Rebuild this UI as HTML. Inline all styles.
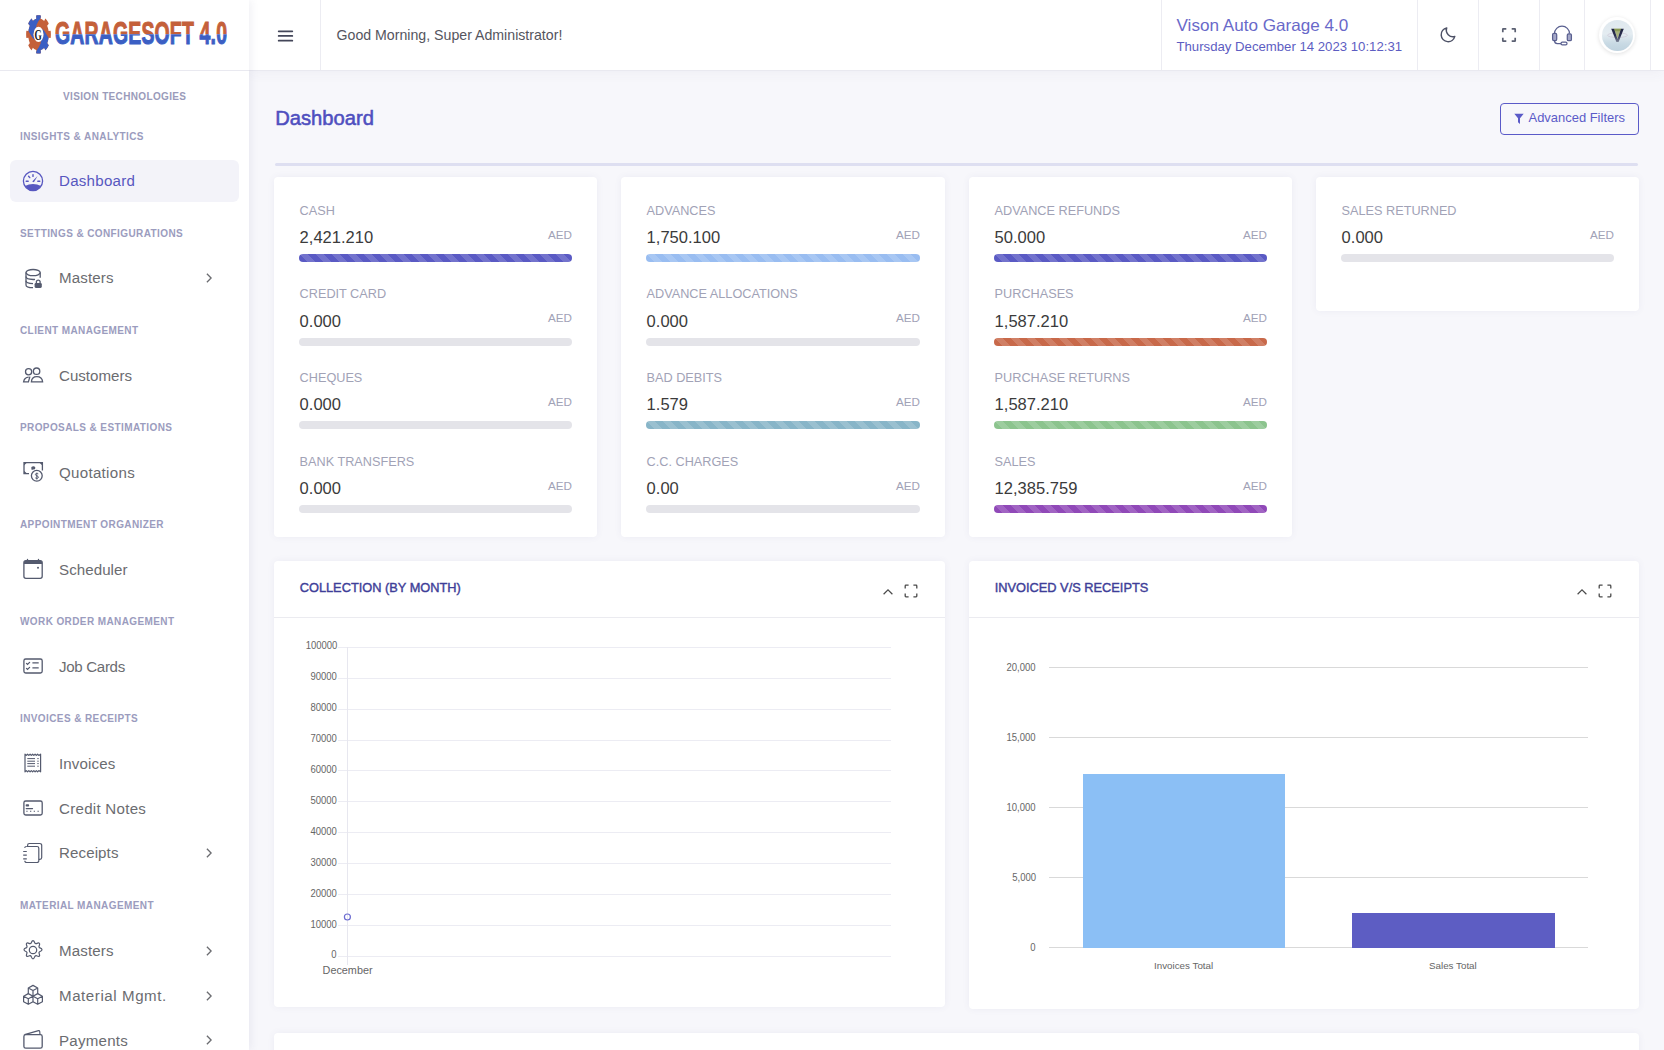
<!DOCTYPE html>
<html><head><meta charset="utf-8"><title>Dashboard</title>
<style>
*{box-sizing:border-box;margin:0;padding:0}
html,body{width:1664px;height:1050px;overflow:hidden;background:#f7f7fb;font-family:"Liberation Sans",sans-serif}
.abs{position:absolute}
.t{position:absolute;white-space:nowrap;line-height:1}
.card{position:absolute;background:#fff;border-radius:4px;box-shadow:0 0 7px rgba(80,80,140,.07)}
.bar{position:absolute;height:8px;border-radius:4px;background:#e4e4e9}
.striped{background-image:linear-gradient(45deg,rgba(255,255,255,.15) 25%,transparent 25%,transparent 50%,rgba(255,255,255,.15) 50%,rgba(255,255,255,.15) 75%,transparent 75%,transparent);background-size:16px 16px}
</style></head><body>
<div class="t" style="left:275.2px;top:107.60px;font-size:20.2px;font-weight:400;color:#4f4fbf;-webkit-text-stroke:0.55px #4f4fbf">Dashboard</div>
<div class="abs" style="left:1500px;top:103px;width:139px;height:32px;border:1px solid #5b5bc8;border-radius:4px"></div>
<svg class="abs" style="left:1513px;top:113px" width="12" height="12" viewBox="0 0 12 12"><path d="M1.3 0.8H10.7L7 5.2V11L5 9.2V5.2Z" fill="#5b5bc8"/></svg>
<div class="t" style="left:1528.5px;top:112.46px;font-size:12.96px;font-weight:400;color:#5b5bc8;">Advanced Filters</div>
<div class="abs" style="left:275px;top:163px;width:1363px;height:3px;background:#dedff1;border-radius:2px"></div>
<div class="card" style="left:274px;top:177px;width:323px;height:360px"></div>
<div class="t" style="left:299.6px;top:204.79px;font-size:12.7px;font-weight:400;color:#a1a2b6;">CASH</div>
<div class="t" style="left:299.6px;top:229.95px;font-size:16.54px;font-weight:400;color:#3b3b3b;">2,421.210</div>
<div class="t" style="right:1092px;top:228.81px;font-size:11.67px;font-weight:400;color:#a1a2b6;">AED</div>
<div class="bar striped" style="left:299px;top:254.0px;width:273px;background-color:#5a5ac4"></div>
<div class="t" style="left:299.6px;top:288.46px;font-size:12.7px;font-weight:400;color:#a1a2b6;">CREDIT CARD</div>
<div class="t" style="left:299.6px;top:313.62px;font-size:16.54px;font-weight:400;color:#3b3b3b;">0.000</div>
<div class="t" style="right:1092px;top:312.48px;font-size:11.67px;font-weight:400;color:#a1a2b6;">AED</div>
<div class="bar" style="left:299px;top:337.7px;width:273px;"></div>
<div class="t" style="left:299.6px;top:372.13px;font-size:12.7px;font-weight:400;color:#a1a2b6;">CHEQUES</div>
<div class="t" style="left:299.6px;top:397.29px;font-size:16.54px;font-weight:400;color:#3b3b3b;">0.000</div>
<div class="t" style="right:1092px;top:396.15px;font-size:11.67px;font-weight:400;color:#a1a2b6;">AED</div>
<div class="bar" style="left:299px;top:421.3px;width:273px;"></div>
<div class="t" style="left:299.6px;top:455.80px;font-size:12.7px;font-weight:400;color:#a1a2b6;">BANK TRANSFERS</div>
<div class="t" style="left:299.6px;top:480.96px;font-size:16.54px;font-weight:400;color:#3b3b3b;">0.000</div>
<div class="t" style="right:1092px;top:479.82px;font-size:11.67px;font-weight:400;color:#a1a2b6;">AED</div>
<div class="bar" style="left:299px;top:505.0px;width:273px;"></div>
<div class="card" style="left:621px;top:177px;width:324px;height:360px"></div>
<div class="t" style="left:646.6px;top:204.79px;font-size:12.7px;font-weight:400;color:#a1a2b6;">ADVANCES</div>
<div class="t" style="left:646.6px;top:229.95px;font-size:16.54px;font-weight:400;color:#3b3b3b;">1,750.100</div>
<div class="t" style="right:744px;top:228.81px;font-size:11.67px;font-weight:400;color:#a1a2b6;">AED</div>
<div class="bar striped" style="left:646px;top:254.0px;width:274px;background-color:#99bdf1"></div>
<div class="t" style="left:646.6px;top:288.46px;font-size:12.7px;font-weight:400;color:#a1a2b6;">ADVANCE ALLOCATIONS</div>
<div class="t" style="left:646.6px;top:313.62px;font-size:16.54px;font-weight:400;color:#3b3b3b;">0.000</div>
<div class="t" style="right:744px;top:312.48px;font-size:11.67px;font-weight:400;color:#a1a2b6;">AED</div>
<div class="bar" style="left:646px;top:337.7px;width:274px;"></div>
<div class="t" style="left:646.6px;top:372.13px;font-size:12.7px;font-weight:400;color:#a1a2b6;">BAD DEBITS</div>
<div class="t" style="left:646.6px;top:397.29px;font-size:16.54px;font-weight:400;color:#3b3b3b;">1.579</div>
<div class="t" style="right:744px;top:396.15px;font-size:11.67px;font-weight:400;color:#a1a2b6;">AED</div>
<div class="bar striped" style="left:646px;top:421.3px;width:274px;background-color:#88b5c8"></div>
<div class="t" style="left:646.6px;top:455.80px;font-size:12.7px;font-weight:400;color:#a1a2b6;">C.C. CHARGES</div>
<div class="t" style="left:646.6px;top:480.96px;font-size:16.54px;font-weight:400;color:#3b3b3b;">0.00</div>
<div class="t" style="right:744px;top:479.82px;font-size:11.67px;font-weight:400;color:#a1a2b6;">AED</div>
<div class="bar" style="left:646px;top:505.0px;width:274px;"></div>
<div class="card" style="left:969px;top:177px;width:323px;height:360px"></div>
<div class="t" style="left:994.6px;top:204.79px;font-size:12.7px;font-weight:400;color:#a1a2b6;">ADVANCE REFUNDS</div>
<div class="t" style="left:994.6px;top:229.95px;font-size:16.54px;font-weight:400;color:#3b3b3b;">50.000</div>
<div class="t" style="right:397px;top:228.81px;font-size:11.67px;font-weight:400;color:#a1a2b6;">AED</div>
<div class="bar striped" style="left:994px;top:254.0px;width:273px;background-color:#5a5ac4"></div>
<div class="t" style="left:994.6px;top:288.46px;font-size:12.7px;font-weight:400;color:#a1a2b6;">PURCHASES</div>
<div class="t" style="left:994.6px;top:313.62px;font-size:16.54px;font-weight:400;color:#3b3b3b;">1,587.210</div>
<div class="t" style="right:397px;top:312.48px;font-size:11.67px;font-weight:400;color:#a1a2b6;">AED</div>
<div class="bar striped" style="left:994px;top:337.7px;width:273px;background-color:#c8694a"></div>
<div class="t" style="left:994.6px;top:372.13px;font-size:12.7px;font-weight:400;color:#a1a2b6;">PURCHASE RETURNS</div>
<div class="t" style="left:994.6px;top:397.29px;font-size:16.54px;font-weight:400;color:#3b3b3b;">1,587.210</div>
<div class="t" style="right:397px;top:396.15px;font-size:11.67px;font-weight:400;color:#a1a2b6;">AED</div>
<div class="bar striped" style="left:994px;top:421.3px;width:273px;background-color:#8cc48e"></div>
<div class="t" style="left:994.6px;top:455.80px;font-size:12.7px;font-weight:400;color:#a1a2b6;">SALES</div>
<div class="t" style="left:994.6px;top:480.96px;font-size:16.54px;font-weight:400;color:#3b3b3b;">12,385.759</div>
<div class="t" style="right:397px;top:479.82px;font-size:11.67px;font-weight:400;color:#a1a2b6;">AED</div>
<div class="bar striped" style="left:994px;top:505.0px;width:273px;background-color:#9049b8"></div>
<div class="card" style="left:1316px;top:177px;width:323px;height:134px"></div>
<div class="t" style="left:1341.6px;top:204.79px;font-size:12.7px;font-weight:400;color:#a1a2b6;">SALES RETURNED</div>
<div class="t" style="left:1341.6px;top:229.95px;font-size:16.54px;font-weight:400;color:#3b3b3b;">0.000</div>
<div class="t" style="right:50px;top:228.81px;font-size:11.67px;font-weight:400;color:#a1a2b6;">AED</div>
<div class="bar" style="left:1341px;top:254.0px;width:273px;"></div>
<div class="card" style="left:274px;top:561px;width:671px;height:446px"></div><div class="t" style="left:299.7px;top:582.04px;font-size:12.8px;font-weight:400;color:#3e3e98;-webkit-text-stroke:0.4px #3e3e98">COLLECTION (BY MONTH)</div><div class="abs" style="left:274px;top:617px;width:671px;height:1px;background:#ebebf0"></div><svg class="abs" style="left:881px;top:583.8px" width="14" height="14" viewBox="0 0 14 14"><path d="M2.6 10.2L7 5.9L11.4 10.2" fill="none" stroke="#4a4a4a" stroke-width="1.2"/></svg><svg class="abs" style="left:904px;top:584px" width="14" height="14" viewBox="0 0 14 14"><path d="M1.2 4.6V1.9A.7 .7 0 0 1 1.9 1.2H4.6M9.4 1.2H12.1A.7 .7 0 0 1 12.8 1.9V4.6M12.8 9.4V12.1A.7 .7 0 0 1 12.1 12.8H9.4M4.6 12.8H1.9A.7 .7 0 0 1 1.2 12.1V9.4" fill="none" stroke="#4a4a4a" stroke-width="1.3"/></svg>
<div class="card" style="left:969px;top:561px;width:670px;height:448px"></div><div class="t" style="left:994.7px;top:582.04px;font-size:12.8px;font-weight:400;color:#3e3e98;-webkit-text-stroke:0.4px #3e3e98">INVOICED V/S RECEIPTS</div><div class="abs" style="left:969px;top:617px;width:670px;height:1px;background:#ebebf0"></div><svg class="abs" style="left:1575px;top:583.8px" width="14" height="14" viewBox="0 0 14 14"><path d="M2.6 10.2L7 5.9L11.4 10.2" fill="none" stroke="#4a4a4a" stroke-width="1.2"/></svg><svg class="abs" style="left:1598px;top:584px" width="14" height="14" viewBox="0 0 14 14"><path d="M1.2 4.6V1.9A.7 .7 0 0 1 1.9 1.2H4.6M9.4 1.2H12.1A.7 .7 0 0 1 12.8 1.9V4.6M12.8 9.4V12.1A.7 .7 0 0 1 12.1 12.8H9.4M4.6 12.8H1.9A.7 .7 0 0 1 1.2 12.1V9.4" fill="none" stroke="#4a4a4a" stroke-width="1.3"/></svg>
<div class="card" style="left:274px;top:1033px;width:1365px;height:100px"></div>
<svg class="abs" style="left:274px;top:618px" width="671" height="389"><line x1="64" y1="29.5" x2="617" y2="29.5" stroke="#ececf3" stroke-width="1"/><line x1="64" y1="60.5" x2="617" y2="60.5" stroke="#ececf3" stroke-width="1"/><line x1="64" y1="91.5" x2="617" y2="91.5" stroke="#ececf3" stroke-width="1"/><line x1="64" y1="122.5" x2="617" y2="122.5" stroke="#ececf3" stroke-width="1"/><line x1="64" y1="152.5" x2="617" y2="152.5" stroke="#ececf3" stroke-width="1"/><line x1="64" y1="183.5" x2="617" y2="183.5" stroke="#ececf3" stroke-width="1"/><line x1="64" y1="214.5" x2="617" y2="214.5" stroke="#ececf3" stroke-width="1"/><line x1="64" y1="245.5" x2="617" y2="245.5" stroke="#ececf3" stroke-width="1"/><line x1="64" y1="276.5" x2="617" y2="276.5" stroke="#ececf3" stroke-width="1"/><line x1="64" y1="307.5" x2="617" y2="307.5" stroke="#ececf3" stroke-width="1"/><line x1="64" y1="338.5" x2="617" y2="338.5" stroke="#ececf3" stroke-width="1"/><line x1="73.5" y1="29" x2="73.5" y2="347" stroke="#e7e7ef" stroke-width="1"/><circle cx="73.4" cy="299" r="3" fill="none" stroke="#6b6bd0" stroke-width="1.2"/></svg>
<div class="t" style="right:1327px;top:641.45px;font-size:10.0px;font-weight:400;color:#666;transform:scaleX(0.95);transform-origin:100% 50%">100000</div>
<div class="t" style="right:1327px;top:672.35px;font-size:10.0px;font-weight:400;color:#666;transform:scaleX(0.95);transform-origin:100% 50%">90000</div>
<div class="t" style="right:1327px;top:703.25px;font-size:10.0px;font-weight:400;color:#666;transform:scaleX(0.95);transform-origin:100% 50%">80000</div>
<div class="t" style="right:1327px;top:734.15px;font-size:10.0px;font-weight:400;color:#666;transform:scaleX(0.95);transform-origin:100% 50%">70000</div>
<div class="t" style="right:1327px;top:765.05px;font-size:10.0px;font-weight:400;color:#666;transform:scaleX(0.95);transform-origin:100% 50%">60000</div>
<div class="t" style="right:1327px;top:795.95px;font-size:10.0px;font-weight:400;color:#666;transform:scaleX(0.95);transform-origin:100% 50%">50000</div>
<div class="t" style="right:1327px;top:826.85px;font-size:10.0px;font-weight:400;color:#666;transform:scaleX(0.95);transform-origin:100% 50%">40000</div>
<div class="t" style="right:1327px;top:857.75px;font-size:10.0px;font-weight:400;color:#666;transform:scaleX(0.95);transform-origin:100% 50%">30000</div>
<div class="t" style="right:1327px;top:888.65px;font-size:10.0px;font-weight:400;color:#666;transform:scaleX(0.95);transform-origin:100% 50%">20000</div>
<div class="t" style="right:1327px;top:919.55px;font-size:10.0px;font-weight:400;color:#666;transform:scaleX(0.95);transform-origin:100% 50%">10000</div>
<div class="t" style="right:1327px;top:950.45px;font-size:10.0px;font-weight:400;color:#666;transform:scaleX(0.95);transform-origin:100% 50%">0</div>
<div class="t" style="left:322.6px;top:964.53px;font-size:10.84px;font-weight:400;color:#666;">December</div>
<svg class="abs" style="left:969px;top:618px" width="670" height="389"><line x1="80" y1="49.5" x2="619" y2="49.5" stroke="#d9d9d9" stroke-width="1"/><line x1="80" y1="119.5" x2="619" y2="119.5" stroke="#d9d9d9" stroke-width="1"/><line x1="80" y1="189.5" x2="619" y2="189.5" stroke="#d9d9d9" stroke-width="1"/><line x1="80" y1="259.5" x2="619" y2="259.5" stroke="#d9d9d9" stroke-width="1"/><line x1="80" y1="329.5" x2="619" y2="329.5" stroke="#d9d9d9" stroke-width="1"/><rect x="114" y="156" width="202" height="174" fill="#8bbff5"/><rect x="383" y="295" width="203" height="35" fill="#5d5dc3"/></svg>
<div class="t" style="right:628px;top:663.15px;font-size:10.0px;font-weight:400;color:#666;transform:scaleX(0.95);transform-origin:100% 50%">20,000</div>
<div class="t" style="right:628px;top:733.15px;font-size:10.0px;font-weight:400;color:#666;transform:scaleX(0.95);transform-origin:100% 50%">15,000</div>
<div class="t" style="right:628px;top:803.15px;font-size:10.0px;font-weight:400;color:#666;transform:scaleX(0.95);transform-origin:100% 50%">10,000</div>
<div class="t" style="right:628px;top:873.15px;font-size:10.0px;font-weight:400;color:#666;transform:scaleX(0.95);transform-origin:100% 50%">5,000</div>
<div class="t" style="right:628px;top:943.15px;font-size:10.0px;font-weight:400;color:#666;transform:scaleX(0.95);transform-origin:100% 50%">0</div>
<div class="t" style="left:1154px;top:960.55px;font-size:9.81px;font-weight:400;color:#666;">Invoices Total</div>
<div class="t" style="left:1429px;top:960.55px;font-size:9.81px;font-weight:400;color:#666;">Sales Total</div>
<div class="abs" style="left:249px;top:0;width:1415px;height:71px;background:#fff;border-bottom:1px solid #e9e9f0;box-shadow:0 3px 12px rgba(60,60,110,.045)"></div>
<div class="abs" style="left:320px;top:0;width:1px;height:70px;background:#ececf2"></div>
<div class="abs" style="left:1161px;top:0;width:1px;height:70px;background:#ececf2"></div>
<div class="abs" style="left:1417px;top:0;width:1px;height:70px;background:#ececf2"></div>
<div class="abs" style="left:1478px;top:0;width:1px;height:70px;background:#ececf2"></div>
<div class="abs" style="left:1539px;top:0;width:1px;height:70px;background:#ececf2"></div>
<div class="abs" style="left:1584px;top:0;width:1px;height:70px;background:#ececf2"></div>
<div class="abs" style="left:1650px;top:0;width:1px;height:70px;background:#ececf2"></div>
<svg class="abs" style="left:276px;top:28px" width="18" height="16" viewBox="0 0 18 16"><path d="M2.7 3.3H16.3M2.7 7.9H16.3M2.7 12.7H16.3" stroke="#434659" stroke-width="1.8" stroke-linecap="round"/></svg>
<div class="t" style="left:336.5px;top:28.14px;font-size:14.17px;font-weight:400;color:#55555e;">Good Morning, Super Administrator!</div>
<div class="t" style="left:1176.5px;top:17.05px;font-size:17.12px;font-weight:400;color:#6969c9;">Vison Auto Garage 4.0</div>
<div class="t" style="left:1176.5px;top:39.74px;font-size:13.18px;font-weight:400;color:#5d5dc2;">Thursday December 14 2023 10:12:31</div>
<svg class="abs" style="left:1438px;top:25px" width="20" height="20" viewBox="0 0 20 20"><path d="M8.7 3A6.9 6.9 0 1 0 16.8 11.4A6.6 6.6 0 0 1 8.7 3Z" fill="none" stroke="#4d5166" stroke-width="1.45" stroke-linejoin="round"/></svg>
<svg class="abs" style="left:1501px;top:27px" width="16" height="16" viewBox="0 0 16 16"><path d="M1.8 5.3V2.2A.4 .4 0 0 1 2.2 1.8H5.3M10.7 1.8H13.8A.4 .4 0 0 1 14.2 2.2V5.3M14.2 10.7V13.8A.4 .4 0 0 1 13.8 14.2H10.7M5.3 14.2H2.2A.4 .4 0 0 1 1.8 13.8V10.7" fill="none" stroke="#5b6072" stroke-width="1.7"/></svg>
<svg class="abs" style="left:1551px;top:25px" width="22" height="22" viewBox="0 0 22 22"><g fill="none" stroke="#5a6090" stroke-width="1.25"><path d="M3.5 8.6A7.5 7.4 0 0 1 18.5 8.6"/><rect x="1.6" y="8.4" width="4.1" height="7.2" rx="1.3" fill="#a5a8c8"/><rect x="16.3" y="8.8" width="4.1" height="6.9" rx="1.3" fill="#a5a8c8"/><path d="M3.4 15.6C3.6 17.5 4.6 18.6 6.3 18.6H10"/><rect x="10" y="17.2" width="6" height="2.7" rx="1.3"/></g></svg>
<div class="abs" style="left:1599px;top:17px;width:36px;height:36px;border-radius:50%;background:#fff;box-shadow:0 1px 4px rgba(0,0,0,.12)"></div>
<div class="abs" style="left:1602px;top:20px;width:31px;height:31px;border-radius:50%;background:linear-gradient(180deg,#dfe8ee 0%,#e4ecf1 45%,#c9dae4 75%,#bfd2de 100%)"></div>
<svg class="abs" style="left:1602px;top:20px" width="31" height="31" viewBox="0 0 31 31"><defs><linearGradient id="vg" x1="0" y1="0" x2="0" y2="1"><stop offset="0" stop-color="#1f2340"/><stop offset="0.5" stop-color="#2c3050"/><stop offset="1" stop-color="#7d8498"/></linearGradient></defs><ellipse cx="15.5" cy="15.2" rx="10" ry="2.3" fill="none" stroke="#cdc6d6" stroke-width="0.7"/><path d="M11.9 8.8H19.1L15.5 18.5Z" fill="#a7b27a"/><path d="M11.9 8.8H19.1L18.2 11.3H12.8Z" fill="#8a9a55"/><path d="M9.2 8.8H12L15.5 19L19 8.8H21.8L16.6 22H14.4Z" fill="url(#vg)"/></svg>
<div class="abs" style="left:0;top:0;width:249px;height:1050px;background:#fff;box-shadow:1px 0 9px rgba(60,60,110,.09)"></div>
<div class="abs" style="left:0;top:70px;width:249px;height:1px;background:#e9e9f0"></div>
<svg class="abs" style="left:20px;top:10px" width="40" height="50" viewBox="0 0 40 50">
<defs><clipPath id="gc"><path d="M30.86 24.40 L30.86 24.74 L30.85 25.07 L30.84 25.40 L30.83 25.74 L30.81 26.07 L30.79 26.41 L30.77 26.74 L30.74 27.07 L30.71 27.40 L30.67 27.73 L30.63 28.06 L28.57 27.73 L28.54 28.00 L28.49 28.27 L28.45 28.54 L28.40 28.81 L28.35 29.08 L28.30 29.34 L28.24 29.61 L28.18 29.87 L28.12 30.13 L28.05 30.39 L27.98 30.65 L27.91 30.91 L27.83 31.16 L27.76 31.41 L27.68 31.66 L27.59 31.91 L27.51 32.16 L27.42 32.40 L27.33 32.64 L27.23 32.88 L27.14 33.11 L28.75 35.14 L28.62 35.41 L28.50 35.69 L28.37 35.95 L28.24 36.22 L28.11 36.48 L27.97 36.74 L27.83 37.00 L27.69 37.25 L27.54 37.49 L27.39 37.74 L27.24 37.98 L27.09 38.21 L26.93 38.44 L26.77 38.67 L26.61 38.89 L26.44 39.11 L26.28 39.32 L26.11 39.53 L25.94 39.73 L25.77 39.93 L25.59 40.13 L25.41 40.32 L24.11 37.82 L23.96 37.97 L23.80 38.11 L23.65 38.26 L23.49 38.39 L23.34 38.53 L23.18 38.66 L23.02 38.78 L22.85 38.90 L22.69 39.02 L22.52 39.13 L22.36 39.23 L22.19 39.34 L22.02 39.44 L21.85 39.53 L21.68 39.62 L21.51 39.70 L21.34 39.78 L21.17 39.85 L20.99 39.92 L20.82 39.99 L20.64 40.05 L20.86 43.25 L20.65 43.31 L20.43 43.36 L20.22 43.41 L20.01 43.46 L19.79 43.49 L19.58 43.53 L19.36 43.55 L19.15 43.57 L18.93 43.59 L18.72 43.60 L18.50 43.60 L18.28 43.60 L18.07 43.59 L17.85 43.57 L17.64 43.55 L17.42 43.53 L17.21 43.49 L16.99 43.46 L16.78 43.41 L16.57 43.36 L16.35 43.31 L16.14 43.25 L16.36 40.05 L16.18 39.99 L16.01 39.92 L15.83 39.85 L15.66 39.78 L15.49 39.70 L15.32 39.62 L15.15 39.53 L14.98 39.44 L14.81 39.34 L14.64 39.23 L14.48 39.13 L14.31 39.02 L14.15 38.90 L13.98 38.78 L13.82 38.66 L13.66 38.53 L13.51 38.39 L13.35 38.26 L13.20 38.11 L13.04 37.97 L12.89 37.82 L11.59 40.32 L11.41 40.13 L11.23 39.93 L11.06 39.73 L10.89 39.53 L10.72 39.32 L10.56 39.11 L10.39 38.89 L10.23 38.67 L10.07 38.44 L9.91 38.21 L9.76 37.98 L9.61 37.74 L9.46 37.49 L9.31 37.25 L9.17 37.00 L9.03 36.74 L8.89 36.48 L8.76 36.22 L8.63 35.95 L8.50 35.69 L8.38 35.41 L8.25 35.14 L9.86 33.11 L9.77 32.88 L9.67 32.64 L9.58 32.40 L9.49 32.16 L9.41 31.91 L9.32 31.66 L9.24 31.41 L9.17 31.16 L9.09 30.91 L9.02 30.65 L8.95 30.39 L8.88 30.13 L8.82 29.87 L8.76 29.61 L8.70 29.34 L8.65 29.08 L8.60 28.81 L8.55 28.54 L8.51 28.27 L8.46 28.00 L8.43 27.73 L6.37 28.06 L6.33 27.73 L6.29 27.40 L6.26 27.07 L6.23 26.74 L6.21 26.41 L6.19 26.07 L6.17 25.74 L6.16 25.40 L6.15 25.07 L6.14 24.74 L6.14 24.40 L6.14 24.06 L6.15 23.73 L6.16 23.40 L6.17 23.06 L6.19 22.73 L6.21 22.39 L6.23 22.06 L6.26 21.73 L6.29 21.40 L6.33 21.07 L6.37 20.74 L8.43 21.07 L8.46 20.80 L8.51 20.53 L8.55 20.26 L8.60 19.99 L8.65 19.72 L8.70 19.46 L8.76 19.19 L8.82 18.93 L8.88 18.67 L8.95 18.41 L9.02 18.15 L9.09 17.89 L9.17 17.64 L9.24 17.39 L9.32 17.14 L9.41 16.89 L9.49 16.64 L9.58 16.40 L9.67 16.16 L9.77 15.92 L9.86 15.69 L8.25 13.66 L8.38 13.39 L8.50 13.11 L8.63 12.85 L8.76 12.58 L8.89 12.32 L9.03 12.06 L9.17 11.80 L9.31 11.55 L9.46 11.31 L9.61 11.06 L9.76 10.82 L9.91 10.59 L10.07 10.36 L10.23 10.13 L10.39 9.91 L10.56 9.69 L10.72 9.48 L10.89 9.27 L11.06 9.07 L11.23 8.87 L11.41 8.67 L11.59 8.48 L12.89 10.98 L13.04 10.83 L13.20 10.69 L13.35 10.54 L13.51 10.41 L13.66 10.27 L13.82 10.14 L13.98 10.02 L14.15 9.90 L14.31 9.78 L14.48 9.67 L14.64 9.57 L14.81 9.46 L14.98 9.36 L15.15 9.27 L15.32 9.18 L15.49 9.10 L15.66 9.02 L15.83 8.95 L16.01 8.88 L16.18 8.81 L16.36 8.75 L16.14 5.55 L16.35 5.49 L16.57 5.44 L16.78 5.39 L16.99 5.34 L17.21 5.31 L17.42 5.27 L17.64 5.25 L17.85 5.23 L18.07 5.21 L18.28 5.20 L18.50 5.20 L18.72 5.20 L18.93 5.21 L19.15 5.23 L19.36 5.25 L19.58 5.27 L19.79 5.31 L20.01 5.34 L20.22 5.39 L20.43 5.44 L20.65 5.49 L20.86 5.55 L20.64 8.75 L20.82 8.81 L20.99 8.88 L21.17 8.95 L21.34 9.02 L21.51 9.10 L21.68 9.18 L21.85 9.27 L22.02 9.36 L22.19 9.46 L22.36 9.57 L22.52 9.67 L22.69 9.78 L22.85 9.90 L23.02 10.02 L23.18 10.14 L23.34 10.27 L23.49 10.41 L23.65 10.54 L23.80 10.69 L23.96 10.83 L24.11 10.98 L25.41 8.48 L25.59 8.67 L25.77 8.87 L25.94 9.07 L26.11 9.27 L26.28 9.48 L26.44 9.69 L26.61 9.91 L26.77 10.13 L26.93 10.36 L27.09 10.59 L27.24 10.82 L27.39 11.06 L27.54 11.31 L27.69 11.55 L27.83 11.80 L27.97 12.06 L28.11 12.32 L28.24 12.58 L28.37 12.85 L28.50 13.11 L28.62 13.39 L28.75 13.66 L27.14 15.69 L27.23 15.92 L27.33 16.16 L27.42 16.40 L27.51 16.64 L27.59 16.89 L27.68 17.14 L27.76 17.39 L27.83 17.64 L27.91 17.89 L27.98 18.15 L28.05 18.41 L28.12 18.67 L28.18 18.93 L28.24 19.19 L28.30 19.46 L28.35 19.72 L28.40 19.99 L28.45 20.26 L28.49 20.53 L28.54 20.80 L28.57 21.07 L30.63 20.74 L30.67 21.07 L30.71 21.40 L30.74 21.73 L30.77 22.06 L30.79 22.39 L30.81 22.73 L30.83 23.06 L30.84 23.40 L30.85 23.73 L30.86 24.06Z"/></clipPath></defs>
<path d="M30.86 24.40 L30.86 24.74 L30.85 25.07 L30.84 25.40 L30.83 25.74 L30.81 26.07 L30.79 26.41 L30.77 26.74 L30.74 27.07 L30.71 27.40 L30.67 27.73 L30.63 28.06 L28.57 27.73 L28.54 28.00 L28.49 28.27 L28.45 28.54 L28.40 28.81 L28.35 29.08 L28.30 29.34 L28.24 29.61 L28.18 29.87 L28.12 30.13 L28.05 30.39 L27.98 30.65 L27.91 30.91 L27.83 31.16 L27.76 31.41 L27.68 31.66 L27.59 31.91 L27.51 32.16 L27.42 32.40 L27.33 32.64 L27.23 32.88 L27.14 33.11 L28.75 35.14 L28.62 35.41 L28.50 35.69 L28.37 35.95 L28.24 36.22 L28.11 36.48 L27.97 36.74 L27.83 37.00 L27.69 37.25 L27.54 37.49 L27.39 37.74 L27.24 37.98 L27.09 38.21 L26.93 38.44 L26.77 38.67 L26.61 38.89 L26.44 39.11 L26.28 39.32 L26.11 39.53 L25.94 39.73 L25.77 39.93 L25.59 40.13 L25.41 40.32 L24.11 37.82 L23.96 37.97 L23.80 38.11 L23.65 38.26 L23.49 38.39 L23.34 38.53 L23.18 38.66 L23.02 38.78 L22.85 38.90 L22.69 39.02 L22.52 39.13 L22.36 39.23 L22.19 39.34 L22.02 39.44 L21.85 39.53 L21.68 39.62 L21.51 39.70 L21.34 39.78 L21.17 39.85 L20.99 39.92 L20.82 39.99 L20.64 40.05 L20.86 43.25 L20.65 43.31 L20.43 43.36 L20.22 43.41 L20.01 43.46 L19.79 43.49 L19.58 43.53 L19.36 43.55 L19.15 43.57 L18.93 43.59 L18.72 43.60 L18.50 43.60 L18.28 43.60 L18.07 43.59 L17.85 43.57 L17.64 43.55 L17.42 43.53 L17.21 43.49 L16.99 43.46 L16.78 43.41 L16.57 43.36 L16.35 43.31 L16.14 43.25 L16.36 40.05 L16.18 39.99 L16.01 39.92 L15.83 39.85 L15.66 39.78 L15.49 39.70 L15.32 39.62 L15.15 39.53 L14.98 39.44 L14.81 39.34 L14.64 39.23 L14.48 39.13 L14.31 39.02 L14.15 38.90 L13.98 38.78 L13.82 38.66 L13.66 38.53 L13.51 38.39 L13.35 38.26 L13.20 38.11 L13.04 37.97 L12.89 37.82 L11.59 40.32 L11.41 40.13 L11.23 39.93 L11.06 39.73 L10.89 39.53 L10.72 39.32 L10.56 39.11 L10.39 38.89 L10.23 38.67 L10.07 38.44 L9.91 38.21 L9.76 37.98 L9.61 37.74 L9.46 37.49 L9.31 37.25 L9.17 37.00 L9.03 36.74 L8.89 36.48 L8.76 36.22 L8.63 35.95 L8.50 35.69 L8.38 35.41 L8.25 35.14 L9.86 33.11 L9.77 32.88 L9.67 32.64 L9.58 32.40 L9.49 32.16 L9.41 31.91 L9.32 31.66 L9.24 31.41 L9.17 31.16 L9.09 30.91 L9.02 30.65 L8.95 30.39 L8.88 30.13 L8.82 29.87 L8.76 29.61 L8.70 29.34 L8.65 29.08 L8.60 28.81 L8.55 28.54 L8.51 28.27 L8.46 28.00 L8.43 27.73 L6.37 28.06 L6.33 27.73 L6.29 27.40 L6.26 27.07 L6.23 26.74 L6.21 26.41 L6.19 26.07 L6.17 25.74 L6.16 25.40 L6.15 25.07 L6.14 24.74 L6.14 24.40 L6.14 24.06 L6.15 23.73 L6.16 23.40 L6.17 23.06 L6.19 22.73 L6.21 22.39 L6.23 22.06 L6.26 21.73 L6.29 21.40 L6.33 21.07 L6.37 20.74 L8.43 21.07 L8.46 20.80 L8.51 20.53 L8.55 20.26 L8.60 19.99 L8.65 19.72 L8.70 19.46 L8.76 19.19 L8.82 18.93 L8.88 18.67 L8.95 18.41 L9.02 18.15 L9.09 17.89 L9.17 17.64 L9.24 17.39 L9.32 17.14 L9.41 16.89 L9.49 16.64 L9.58 16.40 L9.67 16.16 L9.77 15.92 L9.86 15.69 L8.25 13.66 L8.38 13.39 L8.50 13.11 L8.63 12.85 L8.76 12.58 L8.89 12.32 L9.03 12.06 L9.17 11.80 L9.31 11.55 L9.46 11.31 L9.61 11.06 L9.76 10.82 L9.91 10.59 L10.07 10.36 L10.23 10.13 L10.39 9.91 L10.56 9.69 L10.72 9.48 L10.89 9.27 L11.06 9.07 L11.23 8.87 L11.41 8.67 L11.59 8.48 L12.89 10.98 L13.04 10.83 L13.20 10.69 L13.35 10.54 L13.51 10.41 L13.66 10.27 L13.82 10.14 L13.98 10.02 L14.15 9.90 L14.31 9.78 L14.48 9.67 L14.64 9.57 L14.81 9.46 L14.98 9.36 L15.15 9.27 L15.32 9.18 L15.49 9.10 L15.66 9.02 L15.83 8.95 L16.01 8.88 L16.18 8.81 L16.36 8.75 L16.14 5.55 L16.35 5.49 L16.57 5.44 L16.78 5.39 L16.99 5.34 L17.21 5.31 L17.42 5.27 L17.64 5.25 L17.85 5.23 L18.07 5.21 L18.28 5.20 L18.50 5.20 L18.72 5.20 L18.93 5.21 L19.15 5.23 L19.36 5.25 L19.58 5.27 L19.79 5.31 L20.01 5.34 L20.22 5.39 L20.43 5.44 L20.65 5.49 L20.86 5.55 L20.64 8.75 L20.82 8.81 L20.99 8.88 L21.17 8.95 L21.34 9.02 L21.51 9.10 L21.68 9.18 L21.85 9.27 L22.02 9.36 L22.19 9.46 L22.36 9.57 L22.52 9.67 L22.69 9.78 L22.85 9.90 L23.02 10.02 L23.18 10.14 L23.34 10.27 L23.49 10.41 L23.65 10.54 L23.80 10.69 L23.96 10.83 L24.11 10.98 L25.41 8.48 L25.59 8.67 L25.77 8.87 L25.94 9.07 L26.11 9.27 L26.28 9.48 L26.44 9.69 L26.61 9.91 L26.77 10.13 L26.93 10.36 L27.09 10.59 L27.24 10.82 L27.39 11.06 L27.54 11.31 L27.69 11.55 L27.83 11.80 L27.97 12.06 L28.11 12.32 L28.24 12.58 L28.37 12.85 L28.50 13.11 L28.62 13.39 L28.75 13.66 L27.14 15.69 L27.23 15.92 L27.33 16.16 L27.42 16.40 L27.51 16.64 L27.59 16.89 L27.68 17.14 L27.76 17.39 L27.83 17.64 L27.91 17.89 L27.98 18.15 L28.05 18.41 L28.12 18.67 L28.18 18.93 L28.24 19.19 L28.30 19.46 L28.35 19.72 L28.40 19.99 L28.45 20.26 L28.49 20.53 L28.54 20.80 L28.57 21.07 L30.63 20.74 L30.67 21.07 L30.71 21.40 L30.74 21.73 L30.77 22.06 L30.79 22.39 L30.81 22.73 L30.83 23.06 L30.84 23.40 L30.85 23.73 L30.86 24.06Z" fill="#c4603a"/>
<g clip-path="url(#gc)"><path d="M22.96 3.10 L21.92 2.64 L20.86 2.30 L19.78 2.09 L18.70 2.00 L17.62 2.04 L16.54 2.21 L15.48 2.50 L14.43 2.91 L13.40 3.45 L12.41 4.10 L11.44 4.87 L10.52 5.74 L9.64 6.72 L8.81 7.81 L8.04 8.98 L7.33 10.24 L6.67 11.58 L6.09 13.00 L5.57 14.48 L5.13 16.01 L8.43 21.07 L10.47 24.40 L12.50 27.79 L14.86 30.06 L15.72 30.56 L15.34 30.10 L14.99 29.58 L14.67 29.00 L14.39 28.38 L14.16 27.73 L13.97 27.03 L13.82 26.31 L13.72 25.58 L13.67 24.83 L13.66 24.07 L13.71 23.32 L13.80 22.58 L13.94 21.86 L14.13 21.16 L14.36 20.50 L14.63 19.87 L14.95 19.30 L15.29 18.77 L15.67 18.30 L16.08 17.89 L16.53 14.97 L18.21 11.61 L20.29 8.64Z" fill="#3b5fc4"/><path d="M14.04 45.70 L15.08 46.16 L16.14 46.50 L17.22 46.71 L18.30 46.80 L19.38 46.76 L20.46 46.59 L21.52 46.30 L22.57 45.89 L23.60 45.35 L24.59 44.70 L25.56 43.93 L26.48 43.06 L27.36 42.08 L28.19 40.99 L28.96 39.82 L29.67 38.56 L30.33 37.22 L30.91 35.80 L31.43 34.32 L31.87 32.79 L28.57 27.73 L26.53 24.40 L24.50 21.01 L22.14 18.74 L21.28 18.24 L21.66 18.70 L22.01 19.22 L22.33 19.80 L22.61 20.42 L22.84 21.07 L23.03 21.77 L23.18 22.49 L23.28 23.22 L23.33 23.97 L23.34 24.73 L23.29 25.48 L23.20 26.22 L23.06 26.94 L22.87 27.64 L22.64 28.30 L22.37 28.93 L22.05 29.50 L21.71 30.03 L21.33 30.50 L20.92 30.91 L20.47 33.83 L18.79 37.19 L16.71 40.16Z" fill="#3b5fc4"/></g>
<ellipse cx="18.5" cy="24.4" rx="5.0" ry="7.7" fill="#fff"/>
<text x="0" y="0" font-family="Liberation Serif" font-size="15" font-weight="700" fill="#1a1a1a" transform="translate(14.6,29.5) scale(0.62,1)">G</text>
</svg>
<div class="t" style="left:55px;top:18.3px;font-size:31.5px;font-weight:700;transform:scaleX(0.617);transform-origin:0 0;color:#c4603a;-webkit-text-stroke:1.1px #c4603a;clip-path:inset(0 0 49% 0);letter-spacing:0.3px">GARAGESOFT 4.0</div>
<div class="t" style="left:55px;top:18.3px;font-size:31.5px;font-weight:700;transform:scaleX(0.617);transform-origin:0 0;color:#3b5fc4;-webkit-text-stroke:1.1px #3b5fc4;clip-path:inset(51% 0 0 0);letter-spacing:0.3px">GARAGESOFT 4.0</div>
<div class="abs" style="left:10px;top:160px;width:229px;height:42px;border-radius:6px;background:#f3f3f9"></div>
<div class="t" style="left:0.2px;top:91.75px;font-size:10.0px;font-weight:700;color:#9a9bba;width:249px;text-align:center;letter-spacing:0.35px">VISION TECHNOLOGIES</div>
<div class="t" style="left:20px;top:131.97px;font-size:10.0px;font-weight:700;color:#9b9cbe;letter-spacing:0.4px">INSIGHTS &amp; ANALYTICS</div>
<div class="t" style="left:20px;top:228.60px;font-size:10.0px;font-weight:700;color:#9b9cbe;letter-spacing:0.4px">SETTINGS &amp; CONFIGURATIONS</div>
<div class="t" style="left:20px;top:325.95px;font-size:10.0px;font-weight:700;color:#9b9cbe;letter-spacing:0.4px">CLIENT MANAGEMENT</div>
<div class="t" style="left:20px;top:423.05px;font-size:10.0px;font-weight:700;color:#9b9cbe;letter-spacing:0.4px">PROPOSALS &amp; ESTIMATIONS</div>
<div class="t" style="left:20px;top:519.95px;font-size:10.0px;font-weight:700;color:#9b9cbe;letter-spacing:0.4px">APPOINTMENT ORGANIZER</div>
<div class="t" style="left:20px;top:616.70px;font-size:10.0px;font-weight:700;color:#9b9cbe;letter-spacing:0.4px">WORK ORDER MANAGEMENT</div>
<div class="t" style="left:20px;top:713.65px;font-size:10.0px;font-weight:700;color:#9b9cbe;letter-spacing:0.4px">INVOICES &amp; RECEIPTS</div>
<div class="t" style="left:20px;top:901.00px;font-size:10.0px;font-weight:700;color:#9b9cbe;letter-spacing:0.4px">MATERIAL MANAGEMENT</div>
<div class="t" style="left:59px;top:172.87px;font-size:15.1px;font-weight:400;color:#5757c0;letter-spacing:0.25px">Dashboard</div>
<svg class="abs" style="left:18px;top:165px" width="32" height="32" viewBox="0 0 32 32"><circle cx="15" cy="16" r="9.6" fill="none" stroke="#5757c0" stroke-width="1.3"/>
<path d="M6.9 20.9 Q15 17.2 23.1 20.9 A9.6 9.6 0 0 1 6.9 20.9Z" fill="#5757c0"/>
<path d="M15 9.6V11.4M10.6 11.2L11.8 12.6M8.2 16.3H10.2M19.8 16.3H21.8" stroke="#5757c0" stroke-width="1.4" stroke-linecap="round"/>
<path d="M14.2 16.4L19.6 10.9L15.9 17.3Z" fill="#5757c0"/></svg>
<div class="t" style="left:59px;top:270.37px;font-size:15.1px;font-weight:400;color:#6b6c70;letter-spacing:0.15px">Masters</div>
<svg class="abs" style="left:18px;top:262px" width="32" height="32" viewBox="0 0 32 32"><g fill="none" stroke="#545a6e" stroke-width="1.3">
<ellipse cx="15.1" cy="10.6" rx="7.1" ry="3.1"/>
<path d="M8 10.6V23C8 24.6 10.5 25.7 15 25.7"/>
<path d="M22.2 10.6V15.8"/>
<path d="M8 14.6C8 16.2 11 17.5 15.1 17.5C15.9 17.5 16.5 17.4 17 17.3"/>
<path d="M8 18.8C8 20.4 10.5 21.6 15 21.7"/></g>
<rect x="16.6" y="21" width="7.2" height="4.9" rx="1.3" fill="#545a6e"/>
<path d="M18.4 21.2V19.5A1.9 1.9 0 0 1 22.1 19.5V21.2" fill="none" stroke="#545a6e" stroke-width="1.3"/></svg>
<svg class="abs" style="left:203px;top:272.0px" width="12" height="12" viewBox="0 0 12 12"><path d="M3.9 1.7L8.1 6L3.9 10.3" fill="none" stroke="#6b6c70" stroke-width="1.3"/></svg>
<div class="t" style="left:59px;top:367.52px;font-size:15.1px;font-weight:400;color:#6b6c70;letter-spacing:0.0px">Customers</div>
<svg class="abs" style="left:18px;top:360px" width="32" height="32" viewBox="0 0 32 32"><g fill="none" stroke="#545a6e" stroke-width="1.3">
<circle cx="10.6" cy="11.8" r="3.1"/><circle cx="18.6" cy="11.2" r="3.2"/>
<path d="M10.7 17.2C7.9 17.4 6 19.4 5.6 21.9H10.4L11.9 16.6"/>
<path d="M13.4 21.9C13.6 18.6 16 16.7 18.9 16.7C21.9 16.7 24.3 18.6 24.6 21.9Z"/></g></svg>
<div class="t" style="left:59px;top:464.52px;font-size:15.1px;font-weight:400;color:#6b6c70;letter-spacing:0.3px">Quotations</div>
<svg class="abs" style="left:18px;top:456px" width="32" height="32" viewBox="0 0 32 32"><g fill="none" stroke="#545a6e" stroke-width="1.3">
<path d="M11 17.6H6V6.6H24.4V14.6"/>
<circle cx="18.8" cy="19.8" r="5.4"/></g>
<path d="M6 6.6H9L6 9.5Z M24.4 6.6H21.2L24.4 9.5Z M6 17.6H9L6 14.8Z" fill="#545a6e"/>
<path d="M13.2 11.8A2.1 1.6 0 1 1 15.2 13.5L13.7 14Z" fill="#545a6e"/>
<path d="M20.3 17.8C19.3 17 17.4 17.2 17.4 18.5C17.4 20 20.4 19.6 20.4 21.2C20.4 22.6 18.3 22.7 17.3 21.9M18.8 16.8V23.5" fill="none" stroke="#545a6e" stroke-width="1"/></svg>
<div class="t" style="left:59px;top:561.52px;font-size:15.1px;font-weight:400;color:#6b6c70;letter-spacing:0.07px">Scheduler</div>
<svg class="abs" style="left:18px;top:552px" width="32" height="32" viewBox="0 0 32 32"><rect x="5.9" y="8.7" width="18.3" height="17.6" rx="2" fill="none" stroke="#545a6e" stroke-width="1.3"/>
<path d="M5.9 10.7A2 2 0 0 1 7.9 8.7H22.2A2 2 0 0 1 24.2 10.7V11.9H5.9Z" fill="#545a6e"/>
<path d="M9.5 7.3V9M20.5 7.3V9" stroke="#545a6e" stroke-width="1.3" stroke-linecap="round"/>
<circle cx="20" cy="15.7" r="1" fill="#545a6e"/></svg>
<div class="t" style="left:59px;top:658.62px;font-size:15.1px;font-weight:400;color:#6b6c70;letter-spacing:-0.32px">Job Cards</div>
<svg class="abs" style="left:18px;top:650px" width="32" height="32" viewBox="0 0 32 32"><rect x="5.9" y="9" width="18.3" height="14" rx="1.8" fill="none" stroke="#545a6e" stroke-width="1.3"/>
<path d="M8.5 13.4L9.5 14.4L11.6 12.4M8.5 18.4L9.5 19.4L11.6 17.4" fill="none" stroke="#545a6e" stroke-width="1.3" stroke-linecap="round"/>
<path d="M14.4 12.9H20.7M14.4 17.9H20.7" stroke="#545a6e" stroke-width="1.3"/></svg>
<div class="t" style="left:59px;top:755.87px;font-size:15.1px;font-weight:400;color:#6b6c70;letter-spacing:0.13px">Invoices</div>
<svg class="abs" style="left:18px;top:747px" width="32" height="32" viewBox="0 0 32 32"><path d="M7 7.2L8.3 8.4L9.5 7.2L10.8 8.4L12.1 7.2L13.3 8.4L14.6 7.2L15.8 8.4L17.1 7.2L18.3 8.4L19.6 7.2L20.8 8.4L22.6 7.2V24.8L20.8 23.6L19.6 24.8L18.3 23.6L17.1 24.8L15.8 23.6L14.6 24.8L13.3 23.6L12.1 24.8L10.8 23.6L9.5 24.8L8.3 23.6L7 24.8Z" fill="none" stroke="#545a6e" stroke-width="1.2" stroke-linejoin="round"/>
<path d="M9.3 11.6H17M9.3 14.2H17M9.3 16.6H17M9.3 19.2H17M19.3 11.6H20.7M19.3 14.2H20.7M19.3 16.6H20.7M19.3 19.2H20.7" stroke="#545a6e" stroke-width="1"/></svg>
<div class="t" style="left:59px;top:800.57px;font-size:15.1px;font-weight:400;color:#6b6c70;letter-spacing:0.27px">Credit Notes</div>
<svg class="abs" style="left:18px;top:792px" width="32" height="32" viewBox="0 0 32 32"><rect x="5.9" y="9" width="18.3" height="14" rx="1.8" fill="none" stroke="#545a6e" stroke-width="1.3"/>
<rect x="7.7" y="12.2" width="3.4" height="2.4" rx="0.8" fill="#545a6e"/>
<path d="M8.2 16.6H14.6" stroke="#545a6e" stroke-width="1.1" stroke-linecap="round"/>
<path d="M8.3 19.3H9.6M12 19.3H13.3M15.7 19.3H17M19.5 19.3H20.8" stroke="#545a6e" stroke-width="1.1"/></svg>
<div class="t" style="left:59px;top:845.42px;font-size:15.1px;font-weight:400;color:#6b6c70;letter-spacing:0.1px">Receipts</div>
<svg class="abs" style="left:18px;top:837px" width="32" height="32" viewBox="0 0 32 32"><g fill="none" stroke="#545a6e" stroke-width="1.2">
<path d="M9.6 9.3V8.3A1.8 1.8 0 0 1 11.4 6.5H21.9A1.8 1.8 0 0 1 23.7 8.3V20.6A1.8 1.8 0 0 1 21.9 22.4H20.8"/>
<path d="M8.3 9.5H19A1.8 1.8 0 0 1 20.8 11.3V23.7A1.8 1.8 0 0 1 19 25.5H8.6A1.8 1.8 0 0 1 6.8 23.7"/>
<path d="M6.6 10.8A1.8 1.8 0 0 1 8.3 9.5"/></g>
<path d="M5.2 14.5H8.8M5.2 18.2H8.8M5.2 21.8H8.8" stroke="#545a6e" stroke-width="1.2"/></svg>
<svg class="abs" style="left:203px;top:847.0px" width="12" height="12" viewBox="0 0 12 12"><path d="M3.9 1.7L8.1 6L3.9 10.3" fill="none" stroke="#6b6c70" stroke-width="1.3"/></svg>
<div class="t" style="left:59px;top:942.92px;font-size:15.1px;font-weight:400;color:#6b6c70;letter-spacing:0.15px">Masters</div>
<svg class="abs" style="left:18px;top:934px" width="32" height="32" viewBox="0 0 32 32"><path d="M15 6.6C16 6.6 16.3 7.6 16.7 8.7C17 9.5 17.8 9.9 18.6 9.6C19.7 9.1 20.6 8.5 21.4 9.3C22.1 10 21.5 10.9 21.1 12C20.8 12.8 21.2 13.6 22 13.9C23.1 14.3 24 14.7 24 15.7C24 16.7 23.1 17.1 22 17.5C21.2 17.8 20.8 18.6 21.1 19.4C21.5 20.5 22.1 21.4 21.4 22.1C20.6 22.9 19.7 22.3 18.6 21.8C17.8 21.5 17 21.9 16.7 22.7C16.3 23.8 16 24.8 15 24.8C14 24.8 13.7 23.8 13.3 22.7C13 21.9 12.2 21.5 11.4 21.8C10.3 22.3 9.4 22.9 8.6 22.1C7.9 21.4 8.5 20.5 8.9 19.4C9.2 18.6 8.8 17.8 8 17.5C6.9 17.1 6 16.7 6 15.7C6 14.7 6.9 14.3 8 13.9C8.8 13.6 9.2 12.8 8.9 12C8.5 10.9 7.9 10 8.6 9.3C9.4 8.5 10.3 9.1 11.4 9.6C12.2 9.9 13 9.5 13.3 8.7C13.7 7.6 14 6.6 15 6.6Z" fill="none" stroke="#545a6e" stroke-width="1.2"/>
<circle cx="15" cy="16" r="3.7" fill="none" stroke="#545a6e" stroke-width="1.2"/></svg>
<svg class="abs" style="left:203px;top:944.5px" width="12" height="12" viewBox="0 0 12 12"><path d="M3.9 1.7L8.1 6L3.9 10.3" fill="none" stroke="#6b6c70" stroke-width="1.3"/></svg>
<div class="t" style="left:59px;top:988.02px;font-size:15.1px;font-weight:400;color:#6b6c70;letter-spacing:0.57px">Material Mgmt.</div>
<svg class="abs" style="left:18px;top:979px" width="32" height="32" viewBox="0 0 32 32"><g fill="none" stroke="#545a6e" stroke-width="1.2" stroke-linejoin="round">
<path d="M15 6.4L19.7 9V14.6L15 17.2L10.3 14.6V9Z M10.3 9L15 11.5L19.7 9 M15 11.5V17.2"/>
<path d="M10.3 14.6L5.6 17.2V22.7L10.3 25.3L15 22.7V17.2 M5.6 17.2L10.3 19.7L15 17.2 M10.3 19.7V25.3"/>
<path d="M19.7 14.6L24.4 17.2V22.7L19.7 25.3L15 22.7 M15 17.2L19.7 19.7L24.4 17.2 M19.7 19.7V25.3"/></g></svg>
<svg class="abs" style="left:203px;top:989.6px" width="12" height="12" viewBox="0 0 12 12"><path d="M3.9 1.7L8.1 6L3.9 10.3" fill="none" stroke="#6b6c70" stroke-width="1.3"/></svg>
<div class="t" style="left:59px;top:1032.72px;font-size:15.1px;font-weight:400;color:#6b6c70;letter-spacing:0.24px">Payments</div>
<svg class="abs" style="left:18px;top:1018px" width="32" height="32" viewBox="0 0 32 32"><rect x="5.9" y="16.6" width="18.3" height="13.6" rx="1.8" fill="none" stroke="#545a6e" stroke-width="1.3"/>
<path d="M6.6 16.6L20.5 12.6A1 1 0 0 1 21.7 13.3L22 16.6" fill="none" stroke="#545a6e" stroke-width="1.2"/></svg>
<svg class="abs" style="left:203px;top:1034.3px" width="12" height="12" viewBox="0 0 12 12"><path d="M3.9 1.7L8.1 6L3.9 10.3" fill="none" stroke="#6b6c70" stroke-width="1.3"/></svg>
</body></html>
